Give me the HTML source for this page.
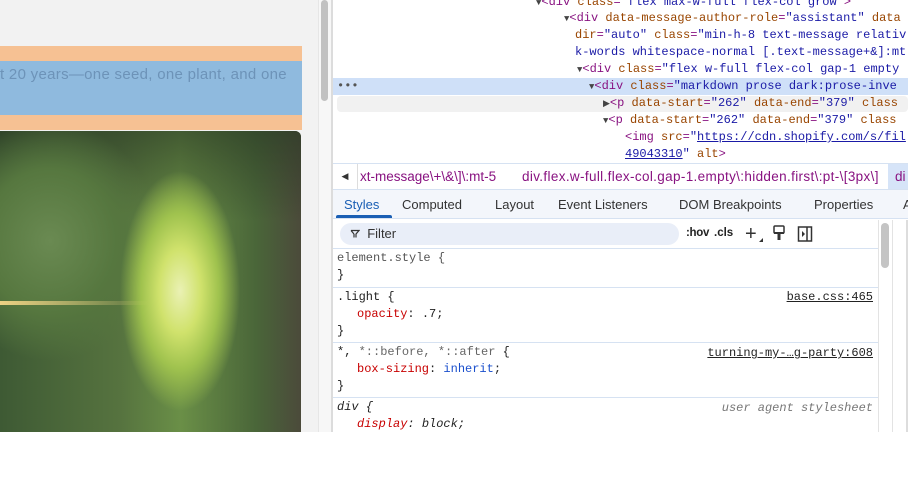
<!DOCTYPE html>
<html><head><style>
*{margin:0;padding:0;box-sizing:border-box}
body{width:908px;height:432px;overflow:hidden;background:#fff;position:relative;font-family:"Liberation Sans",sans-serif}
.abs{position:absolute}
.mono{font-family:"Liberation Mono",monospace;font-size:12px;white-space:pre}
.tag{color:#881280}.an{color:#994500}.av{color:#1a1aa6}
.ln{position:absolute;height:17px;line-height:17px}
.tri{font-size:9px;color:#444}
</style></head><body>
<div class="abs" style="left:0;top:0;width:318px;height:432px;background:#f2f2f2"></div>
<div class="abs" style="left:0;top:46px;width:302px;height:84px;background:#f6c193"></div>
<div class="abs" style="left:0;top:61px;width:302px;height:54px;background:#8fbade"></div>
<div class="abs" style="left:0;top:66px;font-size:15px;color:#6d93b8;white-space:nowrap;letter-spacing:0.3px">t 20 years—one seed, one plant, and one</div>
<div class="abs" style="left:0;top:131px;width:301px;height:301px;border-top-right-radius:6px;overflow:hidden;background:#4a6a3a">
 <div class="abs" style="left:0;top:0;width:301px;height:301px;background:radial-gradient(ellipse 60px 120px at 180px 160px,#eaf1b4 0%,#d0e26c 35%,#9fc24e 65%,rgba(90,130,50,0) 100%),radial-gradient(ellipse 110px 120px at 50px 110px,#6a8a52 0%,#56773f 60%,rgba(60,90,45,0) 100%),linear-gradient(180deg,rgba(40,55,35,.6) 0%,rgba(40,55,35,0) 30%),linear-gradient(90deg,#3e5a34 0%,#56733f 40%,#6a8f47 60%,#4a6639 85%,#4b4a3a 100%)"></div>
 <div class="abs" style="left:0;top:170px;width:150px;height:4px;background:linear-gradient(90deg,rgba(255,220,140,.9),rgba(255,220,140,0))"></div>
</div>
<div class="abs" style="left:318px;top:0;width:13px;height:432px;background:#f7f7f7;border-left:1px solid #e6e6e6"></div>
<div class="abs" style="left:321px;top:0;width:7px;height:101px;background:#c1c1c1;border-radius:4px"></div>
<div class="abs" style="left:331px;top:0;width:2px;height:432px;background:#dcdcdc"></div>

<div class="abs mono" style="left:333px;top:0;width:575px;height:162px;overflow:hidden;background:#fff">
 <div class="abs" style="left:0;top:78px;width:575px;height:17px;background:#cfe0f8"></div>
 <div class="abs" style="left:4px;top:96px;width:571px;height:16px;background:#f1f1f1;border-radius:4px"></div>
 <div class="ln" style="left:4px;top:78px;color:#555">•••</div>
 <div class="ln" style="left:203px;top:-6px"><span class="tri">▼</span><span class="tag">&lt;div </span><span class="an">class</span><span class="tag">=</span><span class="av">"flex max-w-full flex-col grow"</span><span class="tag">&gt;</span></div>
 <div class="ln" style="left:231px;top:10px"><span class="tri">▼</span><span class="tag">&lt;div </span><span class="an">data-message-author-role</span><span class="tag">=</span><span class="av">"assistant"</span> <span class="an">data</span></div>
 <div class="ln" style="left:242px;top:27px"><span class="an">dir</span><span class="tag">=</span><span class="av">"auto"</span> <span class="an">class</span><span class="tag">=</span><span class="av">"min-h-8 text-message relativ</span></div>
 <div class="ln" style="left:242px;top:44px"><span class="av">k-words whitespace-normal [.text-message+&amp;]:mt</span></div>
 <div class="ln" style="left:244px;top:61px"><span class="tri">▼</span><span class="tag">&lt;div </span><span class="an">class</span><span class="tag">=</span><span class="av">"flex w-full flex-col gap-1 empty</span></div>
 <div class="ln" style="left:256px;top:78px"><span class="tri">▼</span><span class="tag">&lt;div </span><span class="an">class</span><span class="tag">=</span><span class="av">"markdown prose dark:prose-inve</span></div>
 <div class="ln" style="left:270px;top:95px"><span class="tri">▶</span><span class="tag">&lt;p </span><span class="an">data-start</span><span class="tag">=</span><span class="av">"262"</span> <span class="an">data-end</span><span class="tag">=</span><span class="av">"379"</span> <span class="an">class</span></div>
 <div class="ln" style="left:270px;top:112px"><span class="tri">▼</span><span class="tag">&lt;p </span><span class="an">data-start</span><span class="tag">=</span><span class="av">"262"</span> <span class="an">data-end</span><span class="tag">=</span><span class="av">"379"</span> <span class="an">class</span></div>
 <div class="ln" style="left:292px;top:129px"><span class="tag">&lt;img </span><span class="an">src</span><span class="tag">=</span><span class="av">"<u>https://cdn.shopify.com/s/fil</u></span></div>
 <div class="ln" style="left:292px;top:146px"><span class="av"><u>49043310</u>"</span> <span class="an">alt</span><span class="tag">&gt;</span></div>
</div>
<div class="abs" style="left:333px;top:163px;width:575px;height:27px;background:#fff;border-top:1px solid #d6e2f2;border-bottom:1px solid #d6e2f2;font-size:13.5px;line-height:25px;white-space:nowrap;overflow:hidden;color:#881280">
 <div class="abs" style="left:0;top:0;width:25px;height:25px;border-right:1px solid #ddd;color:#333;text-align:center;font-size:9px;background:#fff;z-index:2">◀</div>
 <span class="abs" style="left:27px">xt-message\+\&amp;\]\:mt-5</span>
 <span class="abs" style="left:189px;letter-spacing:0.35px">div.flex.w-full.flex-col.gap-1.empty\:hidden.first\:pt-\[3px\]</span>
 <div class="abs" style="left:555px;top:0;width:20px;height:25px;background:#d6e4f8;padding-left:7px">di</div>
</div>
<div class="abs" style="left:333px;top:190px;width:575px;height:29px;background:#f3f6fb;border-bottom:1px solid #d6e2f2;font-size:13px;line-height:29px;color:#333;white-space:nowrap">
 <span class="abs" style="left:11px;color:#1a5fb4">Styles</span>
 <div class="abs" style="left:3px;top:25px;width:56px;height:3px;background:#1a5fb4;border-radius:2px 2px 0 0"></div>
 <span class="abs" style="left:69px">Computed</span>
 <span class="abs" style="left:162px">Layout</span>
 <span class="abs" style="left:225px">Event Listeners</span>
 <span class="abs" style="left:346px">DOM Breakpoints</span>
 <span class="abs" style="left:481px">Properties</span>
 <span class="abs" style="left:570px">A</span>
</div>
<div class="abs" style="left:333px;top:220px;width:545px;height:29px;background:#fff;border-bottom:1px solid #d6e2f2"></div>
<div class="abs" style="left:340px;top:223px;width:339px;height:22px;background:#e9eef8;border-radius:11px;font-size:13px;line-height:22px;color:#333;padding-left:10px">
 <svg width="10" height="10" viewBox="0 0 10 10" style="vertical-align:-1px"><path d="M1 1.5H9L6 5V8.5M4 5V8.5M1 1.5L4 5" stroke="#333" stroke-width="1.2" fill="none"/></svg>&nbsp; Filter</div>
<div class="abs" style="left:686px;top:227px;font-size:11.5px;color:#222;font-weight:bold;letter-spacing:-0.3px">:hov</div>
<div class="abs" style="left:714px;top:227px;font-size:11.5px;color:#222;font-weight:bold">.cls</div>
<div class="abs" style="left:745px;top:225px;font-size:20px;line-height:18px;color:#333">+</div>
<div class="abs" style="left:759px;top:238px;width:0;height:0;border-left:4px solid transparent;border-bottom:4px solid #333"></div>
<svg class="abs" style="left:771px;top:225px" width="16" height="18" viewBox="0 0 16 18"><rect x="3" y="1" width="10" height="7" rx="1" fill="none" stroke="#333" stroke-width="1.5"/><rect x="3" y="7" width="10" height="2" fill="#333"/><rect x="6.5" y="9" width="3" height="6" fill="#333"/></svg>
<svg class="abs" style="left:797px;top:225px" width="16" height="18" viewBox="0 0 16 18"><rect x="1.5" y="2" width="13" height="14" fill="none" stroke="#333" stroke-width="1.5"/><path d="M10 2V16" stroke="#333" stroke-width="1.5"/><path d="M5 6L8 9L5 12Z" fill="#333"/></svg>
<div class="abs" style="left:878px;top:220px;width:14px;height:212px;background:#fff;border-left:1px solid #e3e3e3"></div>
<div class="abs" style="left:881px;top:223px;width:8px;height:45px;background:#c4c4c4;border-radius:4px"></div>
<div class="abs" style="left:892px;top:220px;width:16px;height:212px;background:#fff;border-left:1px solid #e3e3e3"></div>
<div class="abs" style="left:906px;top:220px;width:2px;height:212px;background:#ddd"></div>
<div class="abs mono" style="left:333px;top:249px;width:545px;font-size:12px;color:#222">
 <div class="ln" style="left:4px;top:1px;color:#555">element.style {</div>
 <div class="ln" style="left:4px;top:18px">}</div>
 <div class="abs" style="left:0;top:38px;width:545px;height:1px;background:#d6e2f2"></div>
 <div class="ln" style="left:4px;top:40px">.light {</div>
 <div class="ln" style="right:5px;top:40px"><u>base.css:465</u></div>
 <div class="ln" style="left:24px;top:57px"><span style="color:#c80000">opacity</span>: .7;</div>
 <div class="ln" style="left:4px;top:74px">}</div>
 <div class="abs" style="left:0;top:93px;width:545px;height:1px;background:#d6e2f2"></div>
 <div class="ln" style="left:4px;top:95px">*, <span style="color:#666">*::before, *::after</span> {</div>
 <div class="ln" style="right:5px;top:96px"><u>turning-my-…g-party:608</u></div>
 <div class="ln" style="left:24px;top:112px"><span style="color:#c80000">box-sizing</span>: <span style="color:#1a4fcc">inherit</span>;</div>
 <div class="ln" style="left:4px;top:129px">}</div>
 <div class="abs" style="left:0;top:148px;width:545px;height:1px;background:#d6e2f2"></div>
 <div class="ln" style="left:4px;top:150px;font-style:italic">div {</div>
 <div class="ln" style="right:5px;top:151px;font-style:italic;color:#777">user agent stylesheet</div>
 <div class="ln" style="left:24px;top:167px;font-style:italic"><span style="color:#c80000">display</span>: block;</div>
</div>
</body></html>
